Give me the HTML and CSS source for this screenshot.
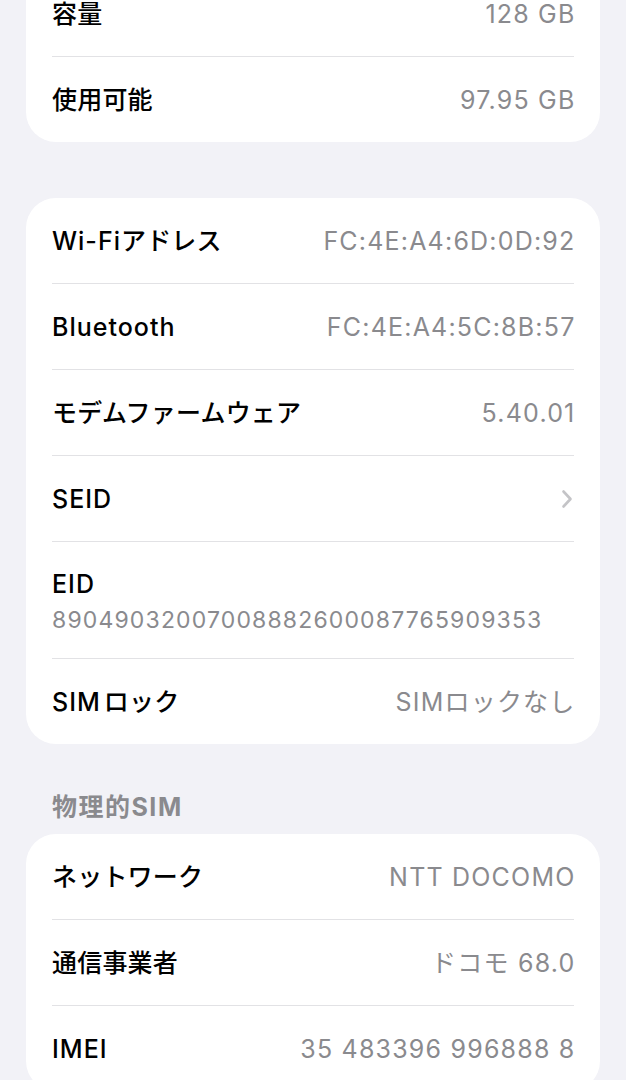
FILE: index.html
```html
<!DOCTYPE html>
<html lang="ja">
<head>
<meta charset="utf-8">
<link rel="stylesheet" href="styles.css">
</head>
<body>
<div class="page">
  <div class="card card-first">
    <div class="row"><span class="label">容量</span><span class="value">128 GB</span></div>
    <div class="row"><span class="label">使用可能</span><span class="value">97.95 GB</span></div>
  </div>

  <div class="card">
    <div class="row"><span class="label"><span class="lat">Wi-Fi</span>アドレス</span><span class="value">FC:4E:A4:6D:0D:92</span></div>
    <div class="row"><span class="label"><span class="lat">Bluetooth</span></span><span class="value">FC:4E:A4:5C:8B:57</span></div>
    <div class="row"><span class="label">モデムファームウェア</span><span class="value">5.40.01</span></div>
    <div class="row"><span class="label"><span class="lat">SEID</span></span>
      <svg class="chevron" width="12" height="20" viewBox="0 0 12 20"><path d="M2.5 2.5 L9.5 10 L2.5 17.5" fill="none" stroke="#c4c4c7" stroke-width="2.6" stroke-linecap="round" stroke-linejoin="round"/></svg>
    </div>
    <div class="row row-stack"><span class="label"><span class="lat">EID</span></span><span class="value value-sub">89049032007008882600087765909353</span></div>
    <div class="row"><span class="label"><span class="lat sim">SIM</span>ロック</span><span class="value">SIMロックなし</span></div>
  </div>

  <div class="section-header">物理的SIM</div>

  <div class="card">
    <div class="row"><span class="label">ネットワーク</span><span class="value">NTT DOCOMO</span></div>
    <div class="row"><span class="label">通信事業者</span><span class="value">ドコモ 68.0</span></div>
    <div class="row"><span class="label"><span class="lat">IMEI</span></span><span class="value">35 483396 996888 8</span></div>
  </div>
</div>
</body>
</html>
```

FILE: styles.css
```css
html, body {
  margin: 0;
  padding: 0;
  background: #f2f2f7;
}
body {
  font-family: Inter, "Noto Sans CJK JP", sans-serif;
  -webkit-font-smoothing: antialiased;
  overflow: hidden;
  height: 1080px;
}
.page {
  display: flex;
  flex-direction: column;
  padding: 0 26px;
  margin-top: -29px;
}
.card {
  background: #ffffff;
  border-radius: 30px;
  padding: 0 26px;
  margin-top: 56px;
}
.card-first {
  margin-top: 0;
}
.row {
  display: flex;
  align-items: center;
  justify-content: space-between;
  height: 85px;
  border-bottom: 1px solid #e2e2e5;
}
.row:last-child {
  border-bottom: none;
}
.label {
  font-size: 25px;
  font-weight: 500;
  color: #000000;
  line-height: 34px;
  letter-spacing: 0.2px;
  white-space: nowrap;
}
.lat {
  letter-spacing: 1px;
}
.sim {
  margin-right: 3px;
}
.value {
  font-size: 25px;
  font-weight: 400;
  color: #8a8a8e;
  line-height: 34px;
  letter-spacing: 1.2px;
  margin-right: -1.5px;
  white-space: nowrap;
}
.row-stack {
  flex-direction: column;
  align-items: flex-start;
  justify-content: flex-start;
  height: auto;
  padding: 25px 0 21px;
  gap: 2px;
}
.value-sub {
  font-size: 23px;
  letter-spacing: 1.15px;
  margin-right: 0;
}
.chevron {
  display: block;
  margin-right: 1px;
}
.section-header {
  font-size: 25px;
  font-weight: 700;
  color: #8a8a8e;
  line-height: 30px;
  letter-spacing: 1.5px;
  padding: 48px 26px 12px;
}
.section-header + .card {
  margin-top: 0;
}
```
